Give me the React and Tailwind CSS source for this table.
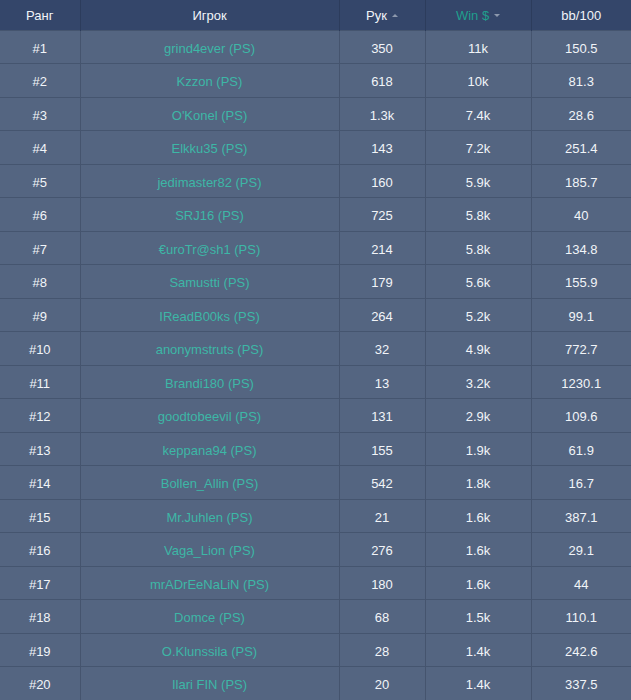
import React from "react";

const rows = [
  ["grind4ever", "350", "11k", "150.5"],
  ["Kzzon", "618", "10k", "81.3"],
  ["O'Konel", "1.3k", "7.4k", "28.6"],
  ["Elkku35", "143", "7.2k", "251.4"],
  ["jedimaster82", "160", "5.9k", "185.7"],
  ["SRJ16", "725", "5.8k", "40"],
  ["€uroTr@sh1", "214", "5.8k", "134.8"],
  ["Samustti", "179", "5.6k", "155.9"],
  ["IReadB00ks", "264", "5.2k", "99.1"],
  ["anonymstruts", "32", "4.9k", "772.7"],
  ["Brandi180", "13", "3.2k", "1230.1"],
  ["goodtobeevil", "131", "2.9k", "109.6"],
  ["keppana94", "155", "1.9k", "61.9"],
  ["Bollen_Allin", "542", "1.8k", "16.7"],
  ["Mr.Juhlen", "21", "1.6k", "387.1"],
  ["Vaga_Lion", "276", "1.6k", "29.1"],
  ["mrADrEeNaLiN", "180", "1.6k", "44"],
  ["Domce", "68", "1.5k", "110.1"],
  ["O.Klunssila", "28", "1.4k", "242.6"],
  ["Ilari FIN", "20", "1.4k", "337.5"],
];

function CaretUp() {
  return (
    <span className="inline-block ml-[5px] align-middle w-0 h-0 border-l-[3px] border-r-[3px] border-b-[3px] border-l-transparent border-r-transparent border-b-[#8d99ad] relative top-[-1px]" />
  );
}
function CaretDown() {
  return (
    <span className="inline-block ml-[5px] align-middle w-0 h-0 border-l-[3px] border-r-[3px] border-t-[3px] border-l-transparent border-r-transparent border-t-[#8d99ad] relative top-[-1px]" />
  );
}

export default function App() {
  return (
    <div className="w-[631px] h-[700px] overflow-hidden bg-[#546581] text-[13px] text-[#f1f4f8]" style={{ fontFamily: '"Liberation Sans", Arial, sans-serif' }}>
      <table className="w-full table-fixed border-collapse">
        <colgroup>
          <col className="w-[80px]" />
          <col className="w-[259px]" />
          <col className="w-[86px]" />
          <col className="w-[106px]" />
          <col className="w-[100px]" />
        </colgroup>
        <thead>
          <tr className="h-[30px] bg-[#34466a]">
            <th className="pt-[2px] font-normal text-center border-r border-[#2c3c5c]">Ранг</th>
            <th className="pt-[2px] font-normal text-center border-r border-[#2c3c5c]">Игрок</th>
            <th className="pt-[2px] font-normal text-center border-r border-[#2c3c5c]">Рук<CaretUp /></th>
            <th className="pt-[2px] font-normal text-center border-r border-[#2c3c5c] text-[#1f9f8d]">Win $<CaretDown /></th>
            <th className="pt-[2px] font-normal text-center">bb/100</th>
          </tr>
        </thead>
        <tbody>
          {rows.map((r, i) => (
            <tr key={i} className="h-[33.5px] border-t border-[#45556f]">
              <td className="pt-[3px] text-center border-r border-[#45546e]">#{i + 1}</td>
              <td className="pt-[3px] text-center border-r border-[#45546e] text-[#3db7a6]">{r[0]} (PS)</td>
              <td className="pt-[3px] text-center border-r border-[#45546e]">{r[1]}</td>
              <td className="pt-[3px] text-center border-r border-[#45546e]">{r[2]}</td>
              <td className="pt-[3px] text-center">{r[3]}</td>
            </tr>
          ))}
        </tbody>
      </table>
    </div>
  );
}
